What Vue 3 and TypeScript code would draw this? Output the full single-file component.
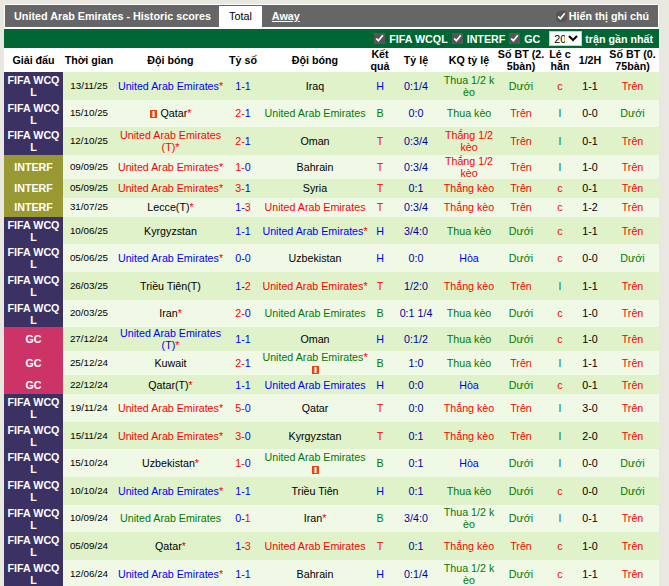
<script setup lang="ts">
interface Team {
    name: string;
    suffix?: string;
    star?: boolean;
    color?: string;
    card?: 'before' | 'below';
}
interface Match {
    league: string;
    date: string;
    home: Team;
    score: [number, number];
    away: Team;
    result: string;
    odds: string;
    bet: string;
    goals: string;
    oddEven: string;
    half: string;
    goals2: string;
}

const uae = (color: string, star = false, suffix = '', card?: 'below'): Team => ({
    name: 'United Arab Emirates',
    color,
    star,
    suffix,
    card,
});
const other = (name: string, star = false, suffix = '', card?: 'before'): Team => ({
    name,
    star,
    suffix,
    card,
});

const WCQ = 'FIFA WCQL';
const INT = 'INTERF';
const GC = 'GC';

const matches: Match[] = [
    { league: WCQ, date: '13/11/25', home: uae('blue', true), score: [1, 1], away: other('Iraq'), result: 'H', odds: '0:1/4', bet: 'Thua 1/2 kèo', goals: 'Dưới', oddEven: 'c', half: '1-1', goals2: 'Trên' },
    { league: WCQ, date: '15/10/25', home: other('Qatar', true, '', 'before'), score: [2, 1], away: uae('green'), result: 'B', odds: '0:0', bet: 'Thua kèo', goals: 'Trên', oddEven: 'l', half: '0-0', goals2: 'Dưới' },
    { league: WCQ, date: '12/10/25', home: uae('red', true, ' (T)'), score: [2, 1], away: other('Oman'), result: 'T', odds: '0:3/4', bet: 'Thắng 1/2 kèo', goals: 'Trên', oddEven: 'l', half: '0-1', goals2: 'Trên' },
    { league: INT, date: '09/09/25', home: uae('red', true), score: [1, 0], away: other('Bahrain'), result: 'T', odds: '0:3/4', bet: 'Thắng 1/2 kèo', goals: 'Trên', oddEven: 'l', half: '1-0', goals2: 'Trên' },
    { league: INT, date: '05/09/25', home: uae('red', true), score: [3, 1], away: other('Syria'), result: 'T', odds: '0:1', bet: 'Thắng kèo', goals: 'Trên', oddEven: 'c', half: '0-1', goals2: 'Trên' },
    { league: INT, date: '31/07/25', home: other('Lecce', true, '(T)'), score: [1, 3], away: uae('red'), result: 'T', odds: '0:3/4', bet: 'Thắng kèo', goals: 'Trên', oddEven: 'c', half: '1-2', goals2: 'Trên' },
    { league: WCQ, date: '10/06/25', home: other('Kyrgyzstan'), score: [1, 1], away: uae('blue', true), result: 'H', odds: '3/4:0', bet: 'Thua kèo', goals: 'Dưới', oddEven: 'c', half: '1-1', goals2: 'Trên' },
    { league: WCQ, date: '05/06/25', home: uae('blue', true), score: [0, 0], away: other('Uzbekistan'), result: 'H', odds: '0:0', bet: 'Hòa', goals: 'Dưới', oddEven: 'c', half: '0-0', goals2: 'Dưới' },
    { league: WCQ, date: '26/03/25', home: other('Triều Tiên', false, '(T)'), score: [1, 2], away: uae('red', true), result: 'T', odds: '1/2:0', bet: 'Thắng kèo', goals: 'Trên', oddEven: 'l', half: '1-1', goals2: 'Trên' },
    { league: WCQ, date: '20/03/25', home: other('Iran', true), score: [2, 0], away: uae('green'), result: 'B', odds: '0:1 1/4', bet: 'Thua kèo', goals: 'Dưới', oddEven: 'c', half: '1-0', goals2: 'Trên' },
    { league: GC, date: '27/12/24', home: uae('blue', true, ' (T)'), score: [1, 1], away: other('Oman'), result: 'H', odds: '0:1/2', bet: 'Thua kèo', goals: 'Dưới', oddEven: 'c', half: '1-0', goals2: 'Trên' },
    { league: GC, date: '25/12/24', home: other('Kuwait'), score: [2, 1], away: uae('green', true, '', 'below'), result: 'B', odds: '1:0', bet: 'Thua kèo', goals: 'Trên', oddEven: 'l', half: '1-1', goals2: 'Trên' },
    { league: GC, date: '22/12/24', home: other('Qatar', true, '(T)'), score: [1, 1], away: uae('blue'), result: 'H', odds: '0:0', bet: 'Hòa', goals: 'Dưới', oddEven: 'c', half: '0-1', goals2: 'Trên' },
    { league: WCQ, date: '19/11/24', home: uae('red', true), score: [5, 0], away: other('Qatar'), result: 'T', odds: '0:0', bet: 'Thắng kèo', goals: 'Trên', oddEven: 'l', half: '3-0', goals2: 'Trên' },
    { league: WCQ, date: '15/11/24', home: uae('red', true), score: [3, 0], away: other('Kyrgyzstan'), result: 'T', odds: '0:1', bet: 'Thắng kèo', goals: 'Trên', oddEven: 'l', half: '2-0', goals2: 'Trên' },
    { league: WCQ, date: '15/10/24', home: other('Uzbekistan', true), score: [1, 0], away: uae('green', false, '', 'below'), result: 'B', odds: '0:1', bet: 'Hòa', goals: 'Dưới', oddEven: 'l', half: '0-0', goals2: 'Dưới' },
    { league: WCQ, date: '10/10/24', home: uae('blue', true), score: [1, 1], away: other('Triều Tiên'), result: 'H', odds: '0:1', bet: 'Thua kèo', goals: 'Dưới', oddEven: 'c', half: '0-0', goals2: 'Dưới' },
    { league: WCQ, date: '10/09/24', home: uae('green'), score: [0, 1], away: other('Iran', true), result: 'B', odds: '3/4:0', bet: 'Thua 1/2 kèo', goals: 'Dưới', oddEven: 'l', half: '0-1', goals2: 'Trên' },
    { league: WCQ, date: '05/09/24', home: other('Qatar', true), score: [1, 3], away: uae('red'), result: 'T', odds: '0:1', bet: 'Thắng kèo', goals: 'Trên', oddEven: 'c', half: '1-0', goals2: 'Trên' },
    { league: WCQ, date: '12/06/24', home: uae('blue', true), score: [1, 1], away: other('Bahrain'), result: 'H', odds: '0:1/4', bet: 'Thua 1/2 kèo', goals: 'Dưới', oddEven: 'c', half: '1-1', goals2: 'Trên' },
];

const filters = ['FIFA WCQL', 'INTERF', 'GC'];
const widths = [59, 52, 111, 34, 110, 20, 52, 54, 50, 28, 32, 53];

const leagueClass = (league: string) =>
    league === WCQ ? 'lg-wcq' : league === INT ? 'lg-int' : 'lg-gc';
const resultClass = (r: string) =>
    r === 'H' ? 'c-blue' : r === 'T' ? 'c-red' : 'c-green';
const betClass = (b: string) =>
    b.startsWith('Thắng') ? 'c-red' : b.startsWith('Thua') ? 'c-green' : 'c-blue';
const overClass = (g: string) => (g === 'Trên' ? 'c-red' : 'c-green');
const scoreClass = (a: number, b: number) => (a > b ? 'c-red' : 'c-blue');
const teamClass = (t: Team) => ['team', t.color ? 'c-' + t.color : ''];
</script>

<template>
    <div class="page">
        <div class="title-bar">
            <span class="title">United Arab Emirates - Historic scores</span>
            <span class="tab tab-on">Total</span>
            <span class="tab tab-away">Away</span>
            <label class="notes"><input type="checkbox" checked />Hiển thị ghi chú</label>
        </div>
        <div class="filter-bar">
            <label v-for="f in filters" :key="f" class="filter">
                <input type="checkbox" checked /><span>{{ f }}</span>
            </label>
            <select class="count">
                <option>20</option>
            </select>
            <span>trận gần nhất</span>
        </div>
        <table class="scores">
            <colgroup>
                <col v-for="(w, i) in widths" :key="i" :style="{ width: w + 'px' }" />
            </colgroup>
            <thead>
                <tr>
                    <th>Giải đấu</th>
                    <th>Thời gian</th>
                    <th>Đội bóng</th>
                    <th>Tỷ số</th>
                    <th>Đội bóng</th>
                    <th>Kết quả</th>
                    <th>Tỷ lệ</th>
                    <th>KQ tỷ lệ</th>
                    <th>Số BT (2.5bàn)</th>
                    <th>Lẻ c hẵn</th>
                    <th>1/2H</th>
                    <th class="th-last">Số BT (0.75bàn)</th>
                </tr>
            </thead>
            <tbody>
                <tr v-for="m in matches" :key="m.date + m.league">
                    <td class="league" :class="leagueClass(m.league)">{{ m.league }}</td>
                    <td class="date">{{ m.date }}</td>
                    <td :class="teamClass(m.home)">
                        <svg v-if="m.home.card === 'before'" class="card" viewBox="0 0 7 8"><rect width="7" height="8" fill="#e8470f" /><rect x="2.5" y="1" width="2" height="6" fill="#fff" /></svg>
                        {{ m.home.name }}{{ m.home.suffix }}<span v-if="m.home.star" class="star">*</span>
                    </td>
                    <td class="score">
                        <span :class="scoreClass(m.score[0], m.score[1])">{{ m.score[0] }}-</span><span :class="scoreClass(m.score[1], m.score[0])">{{ m.score[1] }}</span>
                    </td>
                    <td :class="teamClass(m.away)">
                        {{ m.away.name }}{{ m.away.suffix }}<span v-if="m.away.star" class="star">*</span>
                        <svg v-if="m.away.card === 'below'" class="card card-below" viewBox="0 0 7 8"><rect width="7" height="8" fill="#e8470f" /><rect x="2.5" y="1" width="2" height="6" fill="#fff" /></svg>
                    </td>
                    <td :class="resultClass(m.result)">{{ m.result }}</td>
                    <td class="odds">{{ m.odds }}</td>
                    <td :class="betClass(m.bet)">{{ m.bet }}</td>
                    <td :class="overClass(m.goals)">{{ m.goals }}</td>
                    <td :class="m.oddEven === 'c' ? 'c-red' : 'c-green'">{{ m.oddEven }}</td>
                    <td>{{ m.half }}</td>
                    <td :class="overClass(m.goals2)">{{ m.goals2 }}</td>
                </tr>
            </tbody>
        </table>
    </div>
</template>

<style>
html,
body {
    background: #e8e8e0;
    overflow: hidden;
}
</style>

<style scoped>
.page {
    box-sizing: border-box;
    width: 655px;
    margin: 4px 0 0 4px;
    padding-top: 1px;
    background: #fff;
    font-family: 'Liberation Sans', Arial, sans-serif;
    font-size: 10.7px;
    color: #000;
}
.title-bar {
    display: flex;
    align-items: flex-end;
    height: 22px;
    margin: 0 1px 2px;
    background: #666;
    color: #fff;
    font-weight: bold;
}
.title {
    align-self: center;
    margin-left: 9px;
    font-size: 10.8px;
}
.tab {
    height: 21px;
    line-height: 21px;
    font-size: 10.8px;
}
.tab-on {
    margin-left: 8px;
    padding: 0 10px;
    background: #fff;
    color: #000;
    font-weight: normal;
}
.tab-away {
    margin-left: 10px;
    text-decoration: underline;
}
.notes {
    display: flex;
    align-items: center;
    align-self: center;
    margin-left: auto;
    margin-right: 9px;
}
.notes input,
.filter input {
    width: 11px;
    height: 11px;
    margin: 0 2px 0 0;
    accent-color: #555;
}
.filter-bar {
    display: flex;
    align-items: center;
    justify-content: flex-end;
    height: 19px;
    padding-right: 6px;
    background: #006633;
    color: #fff;
    font-weight: bold;
}
.filter {
    display: flex;
    align-items: center;
    margin-right: 4px;
}
.filter input {
    margin-right: 4px;
}
.count {
    width: 33px;
    height: 15px;
    margin: 0 3px 0 5px;
    padding: 0;
    border: 1px solid #ccc;
    border-radius: 0;
    background: #fff;
    color: #000;
    font-family: inherit;
    font-size: 10.7px;
}
.scores {
    width: 655px;
    table-layout: fixed;
    border-collapse: collapse;
    border-spacing: 0;
}
.scores th {
    height: 24px;
    padding: 0;
    font-weight: bold;
    line-height: 12px;
    word-break: break-all;
    text-align: center;
}
.scores th.th-last {
    padding: 0 3px;
}
.scores td {
    height: 19px;
    padding: 0;
    line-height: 12px;
    text-align: center;
    word-break: break-all;
    vertical-align: middle;
}
tbody tr:nth-child(odd) {
    background: #dff2c9;
}
tbody tr:nth-child(even) {
    background: #f0f9e6;
}
.scores td.league {
    height: auto;
    padding: 2px 3px 1.6px;
    color: #fff;
    font-weight: bold;
}
.lg-wcq {
    background: #3b3163;
}
.lg-int {
    background: #999933;
}
.lg-gc {
    background: #cc3366;
}
.scores td.date {
    font-size: 9.8px;
}
.scores td.team {
    word-break: normal;
}
.card {
    display: inline-block;
    width: 7px;
    height: 8px;
    margin-right: 1px;
    vertical-align: -1px;
}
.card-below {
    display: block;
    margin: 3px auto 1px;
}
.star {
    color: #ff0000;
}
.odds {
    color: #0000a0;
}
.c-blue {
    color: #0000ff;
}
.c-red {
    color: #ff0000;
}
.c-green {
    color: #007a00;
}
</style>
